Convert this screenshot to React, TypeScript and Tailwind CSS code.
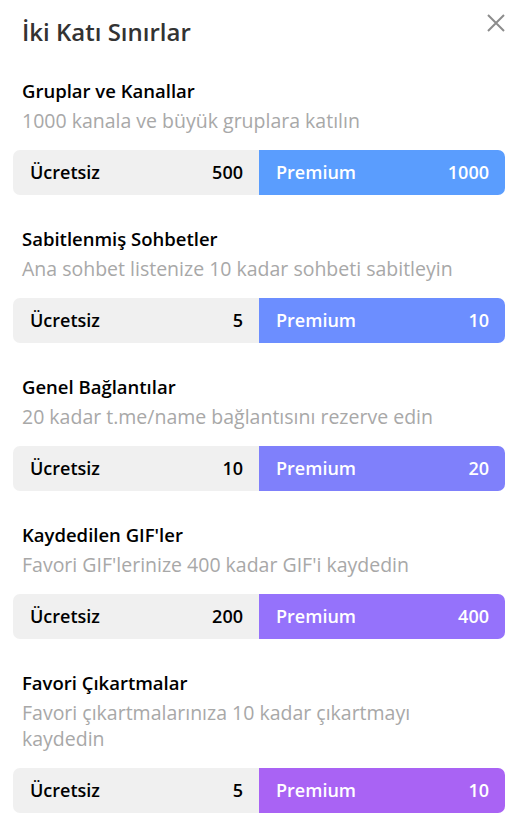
type Limit = {
  title: string;
  desc: string;
  free: string;
  premium: string;
  color: string;
};

const limits: Limit[] = [
  {
    title: "Gruplar ve Kanallar",
    desc: "1000 kanala ve büyük gruplara katılın",
    free: "500",
    premium: "1000",
    color: "bg-[#5a9dfe]",
  },
  {
    title: "Sabitlenmiş Sohbetler",
    desc: "Ana sohbet listenize 10 kadar sohbeti sabitleyin",
    free: "5",
    premium: "10",
    color: "bg-[#6c8eff]",
  },
  {
    title: "Genel Bağlantılar",
    desc: "20 kadar t.me/name bağlantısını rezerve edin",
    free: "10",
    premium: "20",
    color: "bg-[#7f80fb]",
  },
  {
    title: "Kaydedilen GIF'ler",
    desc: "Favori GIF'lerinize 400 kadar GIF'i kaydedin",
    free: "200",
    premium: "400",
    color: "bg-[#9572fb]",
  },
  {
    title: "Favori Çıkartmalar",
    desc: "Favori çıkartmalarınıza 10 kadar çıkartmayı kaydedin",
    free: "5",
    premium: "10",
    color: "bg-[#a963f4]",
  },
];

export default function App() {
  return (
    <div className="w-[510px] h-[825px] bg-white font-['Open_Sans',sans-serif] overflow-hidden">
      {/* Header */}
      <div className="relative pl-[22px] pt-[16px] h-[78px]">
        <h1 className="text-[24px] leading-[32px] font-semibold text-[#333]">
          İki Katı Sınırlar
        </h1>
        <button className="absolute right-[5px] top-[14px] text-[#8c8c8c]">
          <svg width="18" height="18" viewBox="0 0 18 18" fill="none" stroke="currentColor" strokeWidth="2">
            <path d="M1 1L17 17M17 1L1 17" />
          </svg>
        </button>
      </div>

      <div className="flex flex-col gap-[31px] pl-[13px] pr-[5px]">
        {limits.map((l) => (
          <div key={l.title} className="flex flex-col">
            <div className="pl-[9px] pr-[40px]">
              <div className="text-[18.5px] leading-[26px] font-semibold text-black">
                {l.title}
              </div>
              <div className="mt-[4px] text-[19.5px] leading-[26px] text-[#a8a8a8]">
                {l.desc}
              </div>
            </div>
            <div className="mt-[16px] flex h-[45px] rounded-[7px] overflow-hidden text-[18px] font-semibold">
              <div className="flex-1 flex items-center justify-between bg-[#f0f0f0] pl-[17px] pr-[16px] text-black">
                <span>Ücretsiz</span>
                <span>{l.free}</span>
              </div>
              <div className={`flex-1 flex items-center justify-between ${l.color} pl-[17px] pr-[16px] text-white`}>
                <span>Premium</span>
                <span>{l.premium}</span>
              </div>
            </div>
          </div>
        ))}
      </div>
    </div>
  );
}
